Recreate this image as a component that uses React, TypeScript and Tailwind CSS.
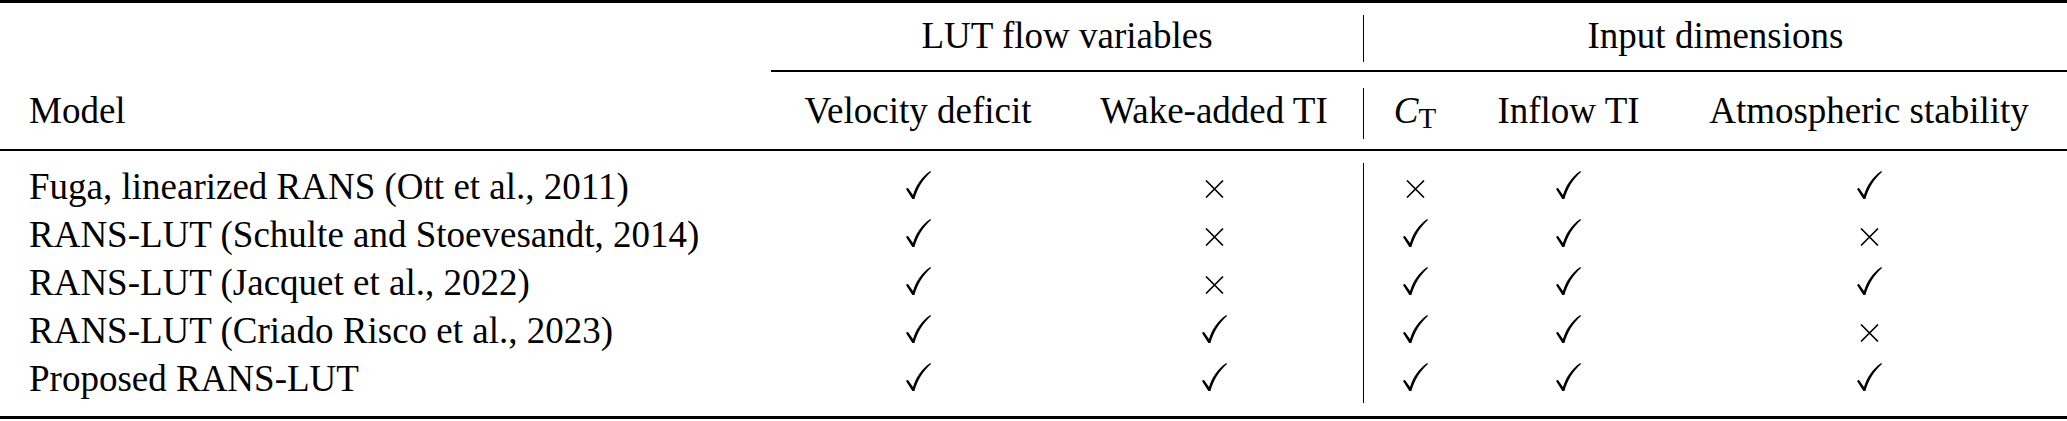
const grid = 'grid grid-cols-[771px_294px_298px_103px_205px_396px]';

type Mark = 1 | 0;

const rows: { model: string; marks: Mark[] }[] = [
  { model: 'Fuga, linearized RANS (Ott et al., 2011)', marks: [1, 0, 0, 1, 1] },
  { model: 'RANS-LUT (Schulte and Stoevesandt, 2014)', marks: [1, 0, 1, 1, 0] },
  { model: 'RANS-LUT (Jacquet et al., 2022)', marks: [1, 0, 1, 1, 1] },
  { model: 'RANS-LUT (Criado Risco et al., 2023)', marks: [1, 1, 1, 1, 0] },
  { model: 'Proposed RANS-LUT', marks: [1, 1, 1, 1, 1] },
];

function Check() {
  return (
    <svg width="25" height="28" viewBox="0 0 25 28" fill="currentColor" className="inline-block align-baseline">
      <path d="M0 18 L1.8 16.8 L7 24 C10 14.5 15.5 6 24.3 0 L25 0.9 C17 8 11.5 17 8.4 28 L6.3 28 Z" />
    </svg>
  );
}

function Cross() {
  return (
    <svg
      width="19"
      height="18"
      viewBox="0 0 19 18"
      fill="none"
      stroke="currentColor"
      strokeWidth="1.6"
      className="inline-block align-[1px]"
    >
      <path d="M1 0.5 L18 17.5 M18 0.5 L1 17.5" />
    </svg>
  );
}

function Cell({ mark }: { mark: Mark }) {
  return mark ? <Check /> : <Cross />;
}

export default function App() {
  return (
    <div className="w-[2067px] h-[421px] bg-white text-black font-['Liberation_Serif',serif] text-[37px]">
      {/* top rule */}
      <div className="h-[2.5px] bg-black" />

      {/* header row 1 */}
      <div className={`${grid} mt-[12.5px] h-[47px] leading-[41px]`}>
        <div />
        <div className="col-span-2 text-center">LUT flow variables</div>
        <div className="col-span-3 border-l-[1.5px] border-black text-center">Input dimensions</div>
      </div>

      {/* cmidrule */}
      <div className={`${grid} mt-[8px]`}>
        <div />
        <div className="col-span-5 h-[1.5px] bg-black" />
      </div>

      {/* header row 2 */}
      <div className={`${grid} mt-[16.5px] h-[49px] leading-[41px]`}>
        <div className="pl-[29px] pt-[2px]">Model</div>
        <div className="pt-[2px] text-center">Velocity deficit</div>
        <div className="pt-[2px] text-center">Wake-added TI</div>
        <div className="border-l-[1.5px] border-black pt-[2px] text-center">
          <i>C</i>
          <span className="text-[29px] align-[-5px]">T</span>
        </div>
        <div className="pt-[2px] text-center">Inflow TI</div>
        <div className="pt-[2px] text-center">Atmospheric stability</div>
      </div>

      {/* midrule */}
      <div className="mt-[12px] h-[1.5px] bg-black" />

      {/* body */}
      <div className="mt-[12.5px]">
        {rows.map((row) => (
          <div key={row.model} className={`${grid} h-[48px] leading-[48px]`}>
            <div className="pl-[29px] whitespace-nowrap">{row.model}</div>
            {row.marks.map((m, i) => (
              <div
                key={i}
                className={i === 2 ? 'border-l-[1.5px] border-black text-center' : 'text-center'}
              >
                <Cell mark={m} />
              </div>
            ))}
          </div>
        ))}
      </div>

      {/* bottom rule */}
      <div className="mt-[13px] h-[2.5px] bg-black" />
    </div>
  );
}
